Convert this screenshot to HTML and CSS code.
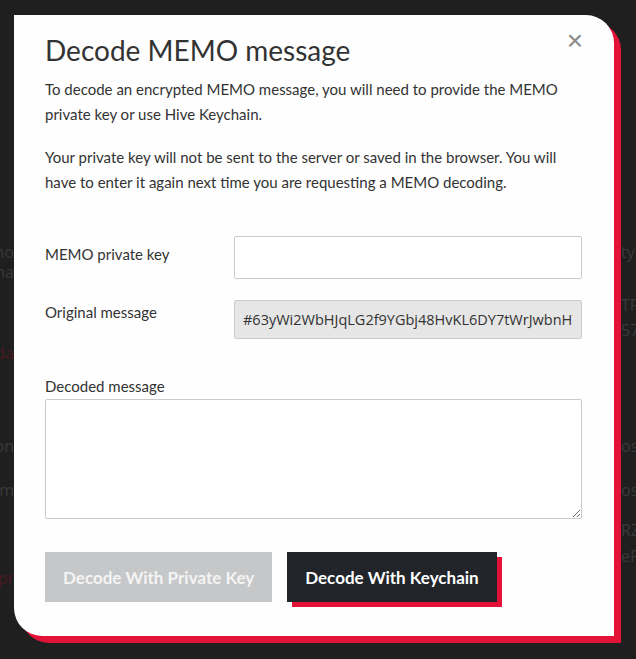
FILE: index.html
```html
<!DOCTYPE html>
<html lang="en">
<head>
    <meta charset="UTF-8">
    <meta name="viewport" content="width=device-width, initial-scale=1.0">
    <title>Decode MEMO message</title>
    <link rel="stylesheet" href="styles.css">
</head>
<body>
    <!-- Page behind the overlay, mostly hidden -->
    <div class="page" aria-hidden="true">
        <div class="page-row"><span class="left">memo</span><span class="right">ty v</span></div>
        <div class="page-row"><span class="left">ma</span><span class="right"></span></div>
        <div class="page-row gap-13"><span class="left"></span><span class="right">TF</span></div>
        <div class="page-row gap-5"><span class="left"></span><span class="right">57</span></div>
        <div class="page-row gap-3"><span class="left red">da</span><span class="right"></span></div>
        <div class="page-row gap-73"><span class="left">on</span><span class="right">os a</span></div>
        <div class="page-row gap-24"><span class="left">om</span><span class="right">os a</span></div>
        <div class="page-row gap-20"><span class="left"></span><span class="right">RZ</span></div>
        <div class="page-row gap-6"><span class="left"></span><span class="right">eP</span></div>
        <div class="page-row gap-2"><span class="left red">pr</span><span class="right"></span></div>
    </div>

    <div class="modal" role="dialog" aria-labelledby="modal-title">
        <button class="close" aria-label="Close">&times;</button>
        <h1 id="modal-title">Decode MEMO message</h1>
        <p>To decode an encrypted MEMO message, you will need to provide the MEMO private key or use Hive Keychain.</p>
        <p>Your private key will not be sent to the server or saved in the browser. You will have to enter it again next time you are requesting a MEMO decoding.</p>

        <div class="field field-key">
            <label for="memo-key">MEMO private key</label>
            <input type="password" id="memo-key" class="input">
        </div>
        <div class="field field-orig">
            <label for="orig">Original message</label>
            <input type="text" id="orig" class="input input-ro" value="#63yWi2WbHJqLG2f9YGbj48HvKL6DY7tWrJwbnH7sPXe3" readonly>
        </div>

        <div class="decoded">
            <label for="decoded">Decoded message</label>
            <textarea id="decoded" class="textarea"></textarea>
        </div>

        <div class="actions">
            <button class="btn btn-disabled" disabled>Decode With Private Key</button>
            <button class="btn btn-dark">Decode With Keychain</button>
        </div>
    </div>
</body>
</html>
```

FILE: styles.css
```css
/* Global Styles */
body {
    margin: 0;
    height: 659px;
    overflow: hidden;
    position: relative;
    background: #1f1f1f;
    font-family: Lato, 'Open Sans', Arial, sans-serif;
    color: #333;
}

/* Dimmed page behind the modal */
.page {
    padding-top: 242px;
    font-family: 'Open Sans', Arial, sans-serif;
    font-size: 16px;
    color: #3a3a3a;
}

.page-row {
    display: flex;
    justify-content: space-between;
    height: 20px;
    line-height: 20px;
    white-space: nowrap;
}

.page-row .left {
    display: flex;
    justify-content: flex-end;
    width: 14px;
    overflow: hidden;
}

.page-row .right {
    width: 15px;
    overflow: hidden;
}

.red { color: #4a1a22; }

.gap-2 { margin-top: 2px; }
.gap-3 { margin-top: 3px; }
.gap-5 { margin-top: 5px; }
.gap-6 { margin-top: 6px; }
.gap-13 { margin-top: 13px; }
.gap-20 { margin-top: 20px; }
.gap-24 { margin-top: 24px; }
.gap-73 { margin-top: 73px; }

/* Modal */
.modal {
    position: absolute;
    left: 14px;
    top: 15px;
    width: 600px;
    height: 621px;
    box-sizing: border-box;
    padding: 17px 32px 0 31px;
    background: #fefefe;
    border-radius: 0 28px 0 28px;
    box-shadow: 7px 7px 0 #e31337;
}

.close {
    position: absolute;
    top: 11px;
    right: 31px;
    border: none;
    background: none;
    padding: 0;
    font-family: Arial, sans-serif;
    font-size: 28px;
    line-height: 30px;
    color: #8a8a8a;
    cursor: pointer;
}

h1 {
    margin: 0 0 9px;
    font-size: 28px;
    font-weight: 400;
    line-height: 36px;
    color: #333;
}

p {
    margin: 0 0 18px;
    font-size: 15px;
    line-height: 25px;
    color: #333;
}

.field {
    display: flex;
    align-items: flex-start;
}

.field label,
.decoded label {
    width: 189px;
    font-size: 15px;
    line-height: 20px;
}

.field-key {
    margin-top: 41px;
}

.field-key label { padding-top: 8px; }

.field-orig {
    margin-top: 21px;
}

.field-orig label { padding-top: 2px; }

.input {
    flex: 1;
    box-sizing: border-box;
    height: 43px;
    border: 1px solid #cacaca;
    border-radius: 2px;
    background: #fff;
    padding: 0 8px;
    font-family: 'Open Sans', Arial, sans-serif;
    font-size: 14.5px;
    color: #333;
}

.input-ro {
    height: 39px;
    background: #e6e6e6;
}

.decoded {
    margin-top: 37px;
}

.decoded label {
    display: block;
    margin-bottom: 3px;
}

.textarea {
    display: block;
    width: 100%;
    height: 120px;
    box-sizing: border-box;
    border: 1px solid #cacaca;
    border-radius: 2px;
    background: #fff;
}

.actions {
    display: flex;
    gap: 15px;
    margin-top: 33px;
}

.btn {
    height: 50px;
    padding: 0 18px;
    border: none;
    font-family: inherit;
    font-size: 17px;
    font-weight: 700;
    color: #fff;
    cursor: pointer;
}

.btn-disabled {
    background: #c6c7c9;
    color: #f4f4f4;
    cursor: default;
}

.btn-dark {
    background: #212529;
    box-shadow: 5px 5px 0 #e31337;
}
```
